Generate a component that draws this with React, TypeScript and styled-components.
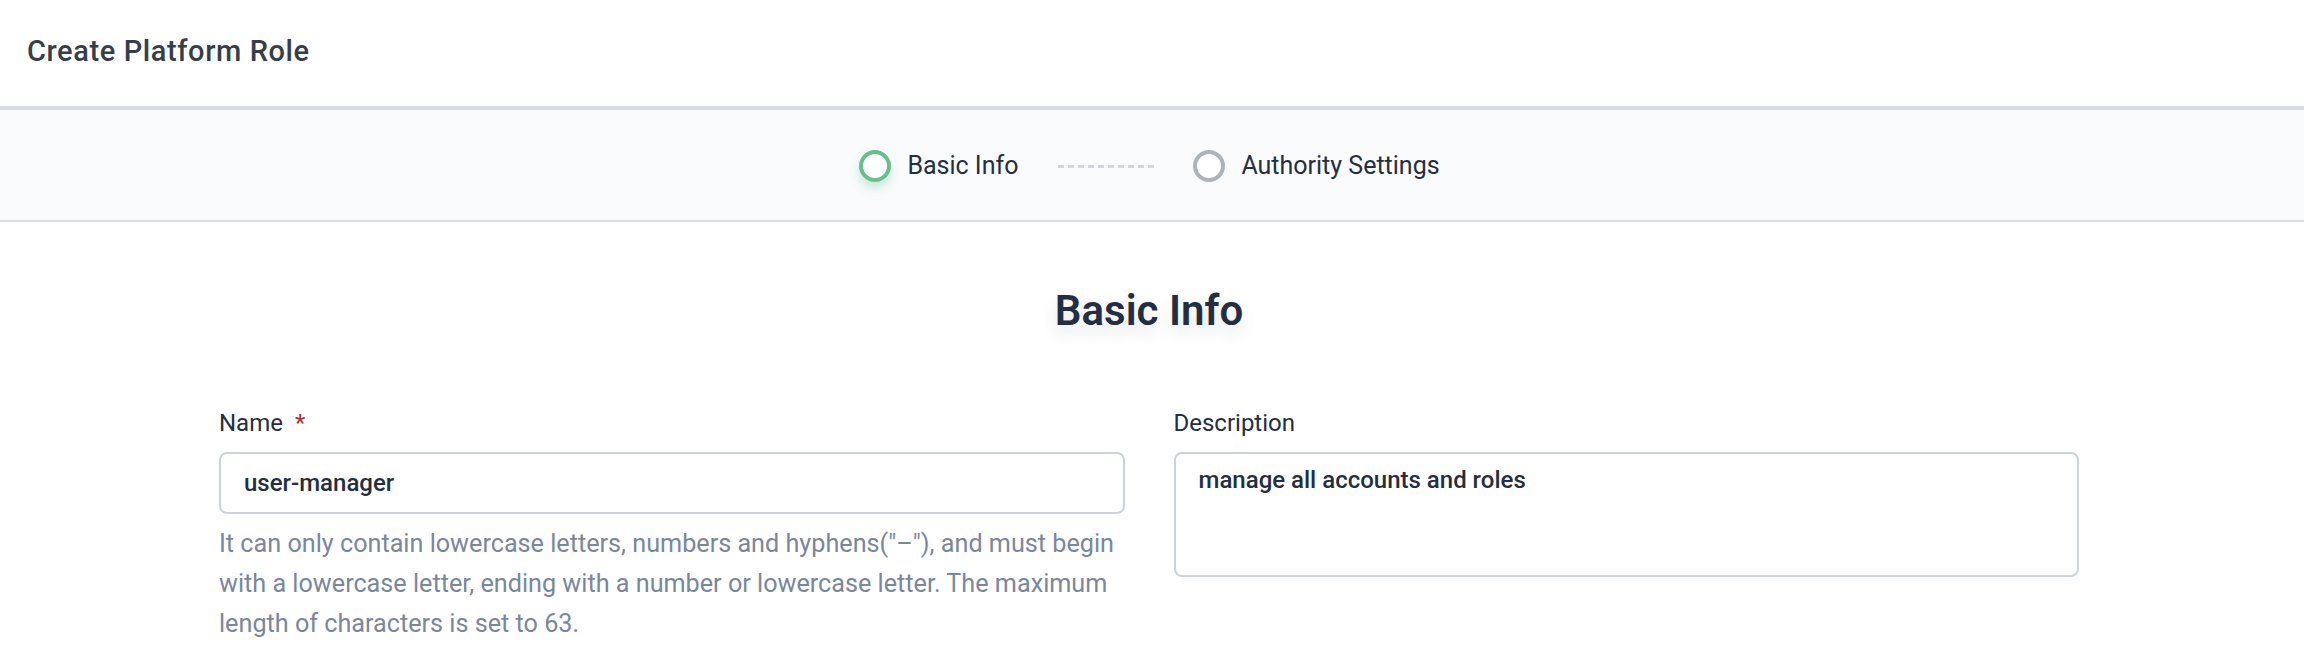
import React from "react";
import styled, { createGlobalStyle } from "styled-components";

const GlobalStyle = createGlobalStyle`
  html, body {
    margin: 0;
    padding: 0;
    background: #ffffff;
  }
  body {
    font-family: Roboto, "Noto Sans", "Liberation Sans", sans-serif;
    color: #242e42;
  }
  * { box-sizing: border-box; }
`;

const Page = styled.div`
  width: 2304px;
  min-height: 656px;
  background: #ffffff;
`;

const Header = styled.header`
  height: 110px;
  display: flex;
  align-items: center;
  padding: 0 0 4px 27px;
  border-bottom: 4px solid #d8dee5;
`;

const Title = styled.h1`
  margin: 0;
  font-family: Roboto, "Liberation Sans", Arial, sans-serif;
  font-size: 29px;
  font-weight: 500;
  color: #363e4a;
  letter-spacing: 0.6px;
`;

const StepBar = styled.nav`
  height: 112px;
  background: #f9fbfd;
  border-bottom: 2px solid #d8dee5;
  display: flex;
  align-items: center;
  justify-content: center;
  padding: 2px 5px 0 0;
`;

const Step = styled.div`
  display: flex;
  align-items: center;
  gap: 16px;
`;

const StepDot = styled.span<{ $active?: boolean }>`
  width: 32px;
  height: 32px;
  border-radius: 50%;
  background: #ffffff;
  border: 4px solid ${(p) => (p.$active ? "#68bf8e" : "#abb3bd")};
  box-shadow: ${(p) => (p.$active ? "0 6px 10px rgba(85, 188, 138, 0.3)" : "none")};
`;

const StepLabel = styled.span`
  font-size: 25px;
  color: #242e42;
  line-height: 32px;
`;

const Connector = styled.span`
  width: 96px;
  height: 3px;
  margin: 0 39px 0 40px;
  background: repeating-linear-gradient(
    to right,
    #d1d7de 0,
    #d1d7de 6px,
    transparent 6px,
    transparent 10px
  );
`;

const Content = styled.main`
  padding: 61px 225px 0 219px;
`;

const Heading = styled.h2`
  margin: 0 0 64px;
  text-align: center;
  font-size: 42px;
  line-height: 56px;
  font-weight: 600;
  color: #242e42;
  text-shadow: 0 8px 16px rgba(36, 46, 66, 0.12);
`;

const FormGrid = styled.div`
  display: grid;
  grid-template-columns: 1fr 1fr;
  column-gap: 49px;
`;

const Field = styled.div`
  display: flex;
  flex-direction: column;
`;

const Label = styled.label`
  font-size: 24px;
  line-height: 40px;
  color: #242e42;
  margin-bottom: 9px;
`;

const Required = styled.span`
  color: #ab2f2f;
  margin-left: 12px;
`;

const TextInput = styled.div`
  height: 62px;
  border: 2px solid #ccd3db;
  border-radius: 8px;
  padding: 0 23px;
  display: flex;
  align-items: center;
  font-size: 24px;
  font-weight: 500;
  color: #242e42;
`;

const TextArea = styled.div`
  height: 125px;
  border: 2px solid #ccd3db;
  border-radius: 8px;
  padding: 10px 23px;
  font-size: 24px;
  line-height: 32px;
  font-weight: 500;
  color: #242e42;
`;

const Help = styled.p`
  margin: 10px 0 0;
  font-size: 25.2px;
  line-height: 40px;
  color: #79879c;
`;

export default function App() {
  return (
    <Page>
      <GlobalStyle />
      <Header>
        <Title>Create Platform Role</Title>
      </Header>
      <StepBar>
        <Step>
          <StepDot $active />
          <StepLabel>Basic Info</StepLabel>
        </Step>
        <Connector />
        <Step>
          <StepDot />
          <StepLabel>Authority Settings</StepLabel>
        </Step>
      </StepBar>
      <Content>
        <Heading>Basic Info</Heading>
        <FormGrid>
          <Field>
            <Label>
              Name<Required>*</Required>
            </Label>
            <TextInput>user-manager</TextInput>
            <Help>
              It can only contain lowercase letters, numbers and hyphens("–"), and must begin with a
              lowercase letter, ending with a number or lowercase letter. The maximum length of
              characters is set to 63.
            </Help>
          </Field>
          <Field>
            <Label>Description</Label>
            <TextArea>manage all accounts and roles</TextArea>
          </Field>
        </FormGrid>
      </Content>
    </Page>
  );
}
